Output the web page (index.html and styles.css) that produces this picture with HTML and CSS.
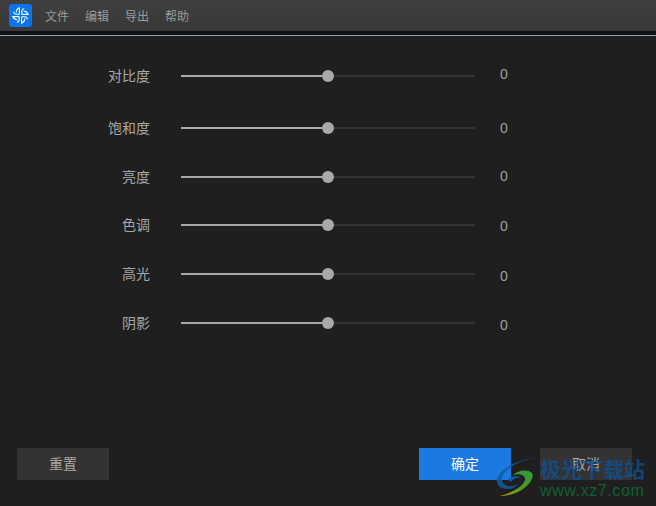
FILE: index.html
```html
<!DOCTYPE html>
<html lang="zh">
<head>
<meta charset="utf-8">
<title>调整</title>
<link rel="stylesheet" href="styles.css">
</head>
<body>
<div class="app">
  <header class="menubar">
    <div class="logo">
      <svg width="23" height="23" viewBox="0 0 23 23" fill="none" stroke="#fff" stroke-width="1.1">
        <path d="M10.400 10.200V3.800C8.200 4.800 7 6.500 7.400 8.500M10.400 10.200H7.200C5.500 10.200 4.700 9 4.800 7.800"/>
        <path transform="rotate(90 11.500 11.500)" d="M10.400 10.200V3.800C8.200 4.800 7 6.500 7.400 8.500M10.400 10.200H7.200C5.500 10.200 4.700 9 4.800 7.800"/>
        <path transform="rotate(180 11.500 11.500)" d="M10.400 10.200V3.800C8.200 4.800 7 6.500 7.400 8.500M10.400 10.200H7.200C5.500 10.200 4.700 9 4.800 7.800"/>
        <path transform="rotate(270 11.500 11.500)" d="M10.400 10.200V3.800C8.200 4.800 7 6.500 7.400 8.500M10.400 10.200H7.200C5.500 10.200 4.700 9 4.800 7.800"/>
      </svg>
    </div>
    <nav class="menu">
      <span>文件</span><span>编辑</span><span>导出</span><span>帮助</span>
    </nav>
  </header>
  <div class="rule"></div>
  <main class="panel">
    <section class="sliders">
      <div class="row"><label>对比度</label><div class="track"><div class="fill"></div><div class="thumb"></div><div class="rest"></div></div><output class="value v-up">0</output></div>
      <div class="row row-b"><label>饱和度</label><div class="track"><div class="fill"></div><div class="thumb"></div><div class="rest"></div></div><output class="value">0</output></div>
      <div class="row row-c"><label>亮度</label><div class="track"><div class="fill"></div><div class="thumb"></div><div class="rest"></div></div><output class="value v-up-s">0</output></div>
      <div class="row row-d"><label>色调</label><div class="track"><div class="fill"></div><div class="thumb"></div><div class="rest"></div></div><output class="value v-down-s">0</output></div>
      <div class="row row-c"><label>高光</label><div class="track"><div class="fill"></div><div class="thumb"></div><div class="rest"></div></div><output class="value v-down">0</output></div>
      <div class="row row-c"><label>阴影</label><div class="track"><div class="fill"></div><div class="thumb"></div><div class="rest"></div></div><output class="value v-down">0</output></div>
    </section>
    <footer class="actions">
      <button class="btn">重置</button>
      <div class="actions-right">
        <button class="btn btn-primary">确定</button>
        <button class="btn">取消</button>
      </div>
    </footer>
  </main>
  <div class="watermark">
    <svg class="wm-logo" width="46" height="46" viewBox="0 0 46 46">
      <defs>
        <linearGradient id="wmGreen" x1="0.1" y1="1" x2="0.8" y2="0">
          <stop offset="0" stop-color="#a8961a"/>
          <stop offset="0.45" stop-color="#4f9a22"/>
          <stop offset="1" stop-color="#2f9a3a"/>
        </linearGradient>
      </defs>
      <path d="M42 1C28 3 12 8 4 17c-5 6-4 13 2 15 6 2 13 1 16-4-5 3-12 3-15-1C3 22 10 13 20 8c8-4 15-6 22-7z" fill="#0f5d9e" fill-opacity=".85"/>
      <path d="M12 24c2-4 10-5 13-2-3-1-8 0-10 4z" fill="#0f5d9e"/>
      <path d="M17 19c5-5 15-6 19-2 3 4-3 13-12 18-8 4-15 5-20 5 10-3 22-8 25-16 1-4-5-7-12-5z" fill="url(#wmGreen)"/>
    </svg>
    <div class="wm-text">
      <div class="wm-cn">极光下载站</div>
      <div class="wm-url">www.xz7.com</div>
    </div>
  </div>
</div>
</body>
</html>
```
FILE: styles.css
```css
* { box-sizing: border-box; }
html, body { margin: 0; height: 100%; }
body {
  background: #1f1f1f;
  font-family: "Noto Sans CJK SC", "Liberation Sans", sans-serif;
  overflow: hidden;
}
.app {
  position: relative;
  width: 656px;
  height: 506px;
  display: flex;
  flex-direction: column;
}
.menubar {
  height: 31px;
  background: linear-gradient(#3f3f3f, #383838);
  display: flex;
  align-items: center;
  padding-left: 9px;
}
.logo {
  width: 23px;
  height: 23px;
  background: #0a74ec;
  border-radius: 3px;
}
.logo svg { display: block; }
.menu {
  display: flex;
  gap: 16px;
  margin-left: 13px;
  font-size: 12px;
  color: #9a9a9a;
}
.rule {
  height: 5px;
  background: #111;
  border-bottom: 1px solid #7fa6c4;
  border-top: 3px solid #111;
  flex: none;
}
.panel {
  flex: 1;
  display: flex;
  flex-direction: column;
  justify-content: space-between;
  padding: 0 24px 26px 17px;
  background: #1f1f1f;
}
.sliders { display: flex; flex-direction: column; padding-top: 30px; }
.row {
  display: flex;
  align-items: center;
  height: 20px;
}
.row-b { margin-top: 32px; }
.row-c { margin-top: 29px; }
.row-d { margin-top: 28px; }
.row label {
  width: 133px;
  text-align: right;
  font-size: 14px;
  line-height: 18px;
  margin-top: -3px;
  color: #a8a8a8;
}
.track {
  width: 294px;
  margin-left: 31px;
  display: flex;
  align-items: center;
}
.fill { width: 141px; height: 2px; background: #a9a9a9; }
.thumb { width: 12px; height: 12px; border-radius: 50%; background: #a9a9a9; flex: none; }
.rest { flex: 1; height: 2px; background: #333; }
.value {
  margin-left: 25px;
  font-family: "Liberation Sans", sans-serif;
  font-size: 14px;
  color: #a0a0a0;
}
.v-up { margin-top: -4px; }
.v-up-s { margin-top: -2px; }
.v-down-s { margin-top: 1px; }
.v-down { margin-top: 3px; }
.actions { display: flex; justify-content: space-between; }
.actions-right { display: flex; gap: 29px; }
.btn {
  width: 92px;
  height: 32px;
  padding: 0 0 2px;
  border: 0;
  background: #333;
  color: #a8a8a8;
  font: 14px "Noto Sans CJK SC", "Liberation Sans", sans-serif;
}
.btn-primary { background: #1a7ae2; color: #fff; }
.watermark {
  position: absolute;
  left: 496px;
  top: 455px;
  display: flex;
  pointer-events: none;
}
.wm-logo { margin-right: -2px; margin-top: 1px; flex: none; }
.wm-text { display: flex; flex-direction: column; }
.wm-cn {
  font-size: 21px;
  line-height: 27px;
  font-weight: 700;
  color: rgba(13, 82, 150, 0.75);
}
.wm-url {
  font-family: "Liberation Sans", sans-serif;
  font-size: 16px;
  line-height: 17px;
  letter-spacing: 0.6px;
  color: #0e6132;
}
```
